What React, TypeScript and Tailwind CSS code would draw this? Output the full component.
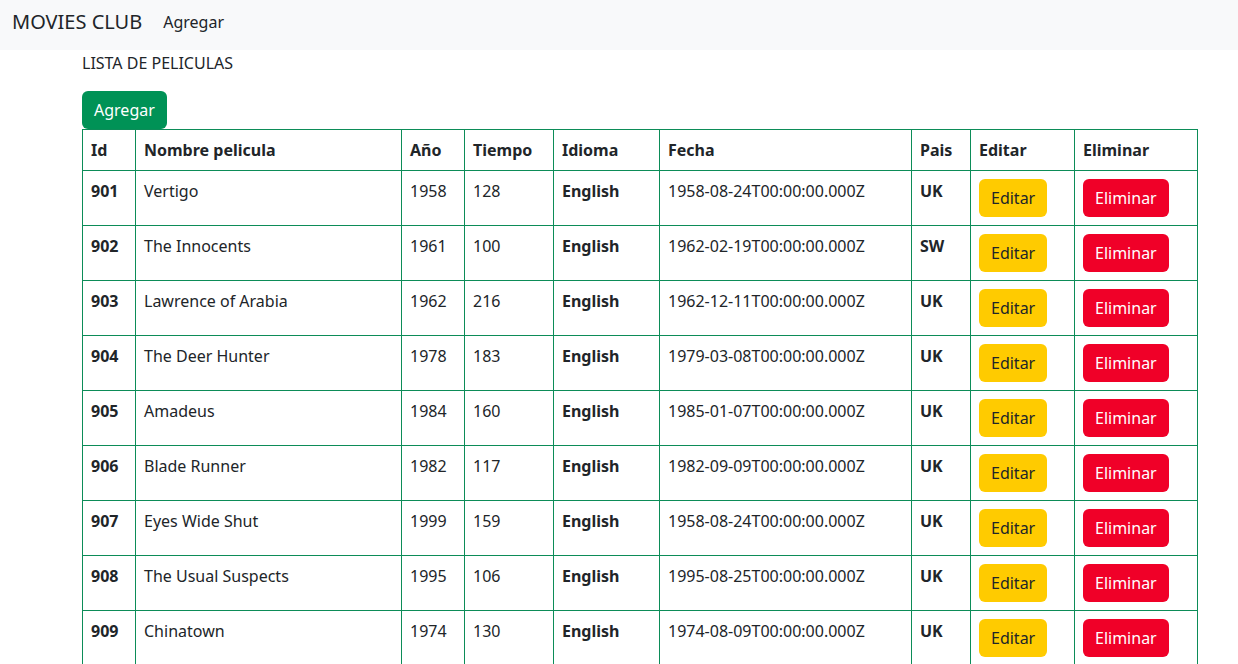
const movies = [
  { id: 901, nombre: 'Vertigo', anio: 1958, tiempo: 128, idioma: 'English', fecha: '1958-08-24T00:00:00.000Z', pais: 'UK' },
  { id: 902, nombre: 'The Innocents', anio: 1961, tiempo: 100, idioma: 'English', fecha: '1962-02-19T00:00:00.000Z', pais: 'SW' },
  { id: 903, nombre: 'Lawrence of Arabia', anio: 1962, tiempo: 216, idioma: 'English', fecha: '1962-12-11T00:00:00.000Z', pais: 'UK' },
  { id: 904, nombre: 'The Deer Hunter', anio: 1978, tiempo: 183, idioma: 'English', fecha: '1979-03-08T00:00:00.000Z', pais: 'UK' },
  { id: 905, nombre: 'Amadeus', anio: 1984, tiempo: 160, idioma: 'English', fecha: '1985-01-07T00:00:00.000Z', pais: 'UK' },
  { id: 906, nombre: 'Blade Runner', anio: 1982, tiempo: 117, idioma: 'English', fecha: '1982-09-09T00:00:00.000Z', pais: 'UK' },
  { id: 907, nombre: 'Eyes Wide Shut', anio: 1999, tiempo: 159, idioma: 'English', fecha: '1958-08-24T00:00:00.000Z', pais: 'UK' },
  { id: 908, nombre: 'The Usual Suspects', anio: 1995, tiempo: 106, idioma: 'English', fecha: '1995-08-25T00:00:00.000Z', pais: 'UK' },
  { id: 909, nombre: 'Chinatown', anio: 1974, tiempo: 130, idioma: 'English', fecha: '1974-08-09T00:00:00.000Z', pais: 'UK' },
]

const cell = 'border border-[#0c8c58] px-2 pt-2 align-top'

export default function App() {
  return (
    <div className="min-h-screen bg-white text-[#212529] font-['Noto_Sans',sans-serif] text-base leading-6">
      {/* Navbar */}
      <nav className="h-[50px] bg-[#f8f9fa] flex items-start pt-[7px] px-3">
        <span className="text-xl leading-[30px] mr-[21px]">MOVIES CLUB</span>
        <a className="leading-[30px]">Agregar</a>
      </nav>

      <div className="pl-[82px] pr-[40px] pt-px">
        <p className="leading-6">LISTA DE PELICULAS</p>
        <button className="mt-4 h-[38px] px-3 rounded-md bg-[#009256] text-white">Agregar</button>

        <table className="w-full border-collapse">
          <thead>
            <tr className="h-[41px]">
              <th className={`${cell} text-left font-bold w-[53px]`}>Id</th>
              <th className={`${cell} text-left font-bold w-[266px]`}>Nombre pelicula</th>
              <th className={`${cell} text-left font-bold w-[63px]`}>Año</th>
              <th className={`${cell} text-left font-bold w-[89px]`}>Tiempo</th>
              <th className={`${cell} text-left font-bold w-[106px]`}>Idioma</th>
              <th className={`${cell} text-left font-bold w-[252px]`}>Fecha</th>
              <th className={`${cell} text-left font-bold w-[59px]`}>Pais</th>
              <th className={`${cell} text-left font-bold w-[104px]`}>Editar</th>
              <th className={`${cell} text-left font-bold`}>Eliminar</th>
            </tr>
          </thead>
          <tbody>
            {movies.map((m) => (
              <tr key={m.id} className="h-[55px]">
                <td className={`${cell} font-bold`}>{m.id}</td>
                <td className={cell}>{m.nombre}</td>
                <td className={cell}>{m.anio}</td>
                <td className={cell}>{m.tiempo}</td>
                <td className={`${cell} font-bold`}>{m.idioma}</td>
                <td className={cell}>{m.fecha}</td>
                <td className={`${cell} font-bold`}>{m.pais}</td>
                <td className={cell}>
                  <button className="h-[38px] px-3 rounded-md bg-[#ffcb00] text-[#212529]">Editar</button>
                </td>
                <td className={cell}>
                  <button className="h-[38px] px-3 rounded-md bg-[#f00028] text-white">Eliminar</button>
                </td>
              </tr>
            ))}
          </tbody>
        </table>
      </div>
    </div>
  )
}
